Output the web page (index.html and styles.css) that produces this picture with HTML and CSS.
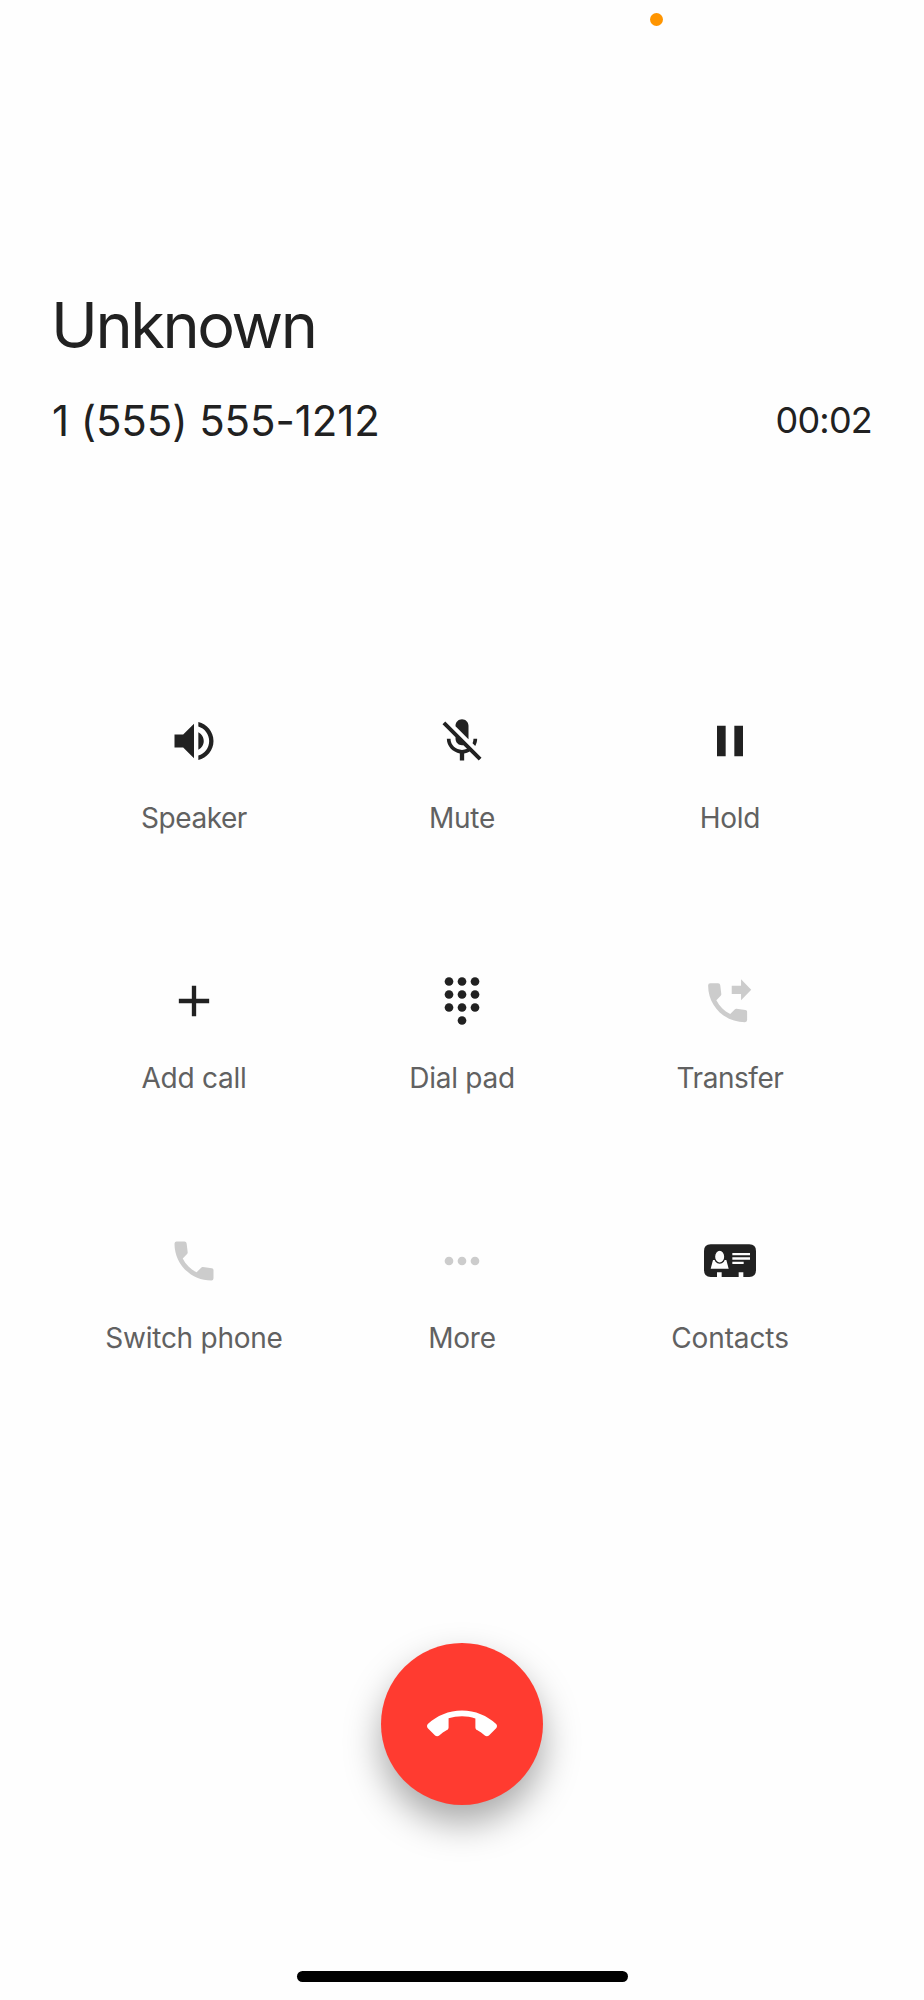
FILE: index.html
```html
<!DOCTYPE html>
<html lang="en">
<head>
<meta charset="utf-8">
<title>Call</title>
<link rel="stylesheet" href="styles.css">
</head>
<body>
<main class="screen">
  <div class="status"><span class="mic-dot"></span></div>
  <header class="caller">
    <h1 class="name">Unknown</h1>
    <div class="details">
      <span class="number">1 (555) 555-1212</span>
      <span class="timer">00:02</span>
    </div>
  </header>
  <section class="actions">
    <button class="action">
      <svg class="icon" viewBox="0 0 24 24"><path d="M3 9v6h4l5 5V4L7 9H3zm13.5 3c0-1.77-1.02-3.29-2.5-4.03v8.05c1.48-.73 2.5-2.25 2.5-4.02zM14 3.23v2.06c2.89.86 5 3.54 5 6.71s-2.11 5.85-5 6.71v2.06c4.01-.91 7-4.49 7-8.77s-2.99-7.86-7-8.77z"/></svg>
      <span class="label tight">Speaker</span>
    </button>
    <button class="action">
      <svg class="icon" viewBox="0 0 24 24"><path d="M19 11h-1.7c0 .74-.16 1.43-.43 2.05l1.23 1.23c.56-.98.9-2.09.9-3.28zm-4.02.17c0-.06.02-.11.02-.17V5c0-1.66-1.34-3-3-3S9 3.34 9 5v.18l5.98 5.99zM4.27 3L3 4.27l6.01 6.01V11c0 1.66 1.33 3 2.99 3 .22 0 .44-.03.65-.08l1.66 1.66c-.71.33-1.5.52-2.31.52-2.76 0-5.3-2.1-5.3-5.1H5c0 3.41 2.72 6.23 6 6.72V21h2v-3.28c.91-.13 1.77-.45 2.54-.9L19.73 21 21 19.73 4.27 3z"/></svg>
      <span class="label">Mute</span>
    </button>
    <button class="action">
      <svg class="icon" viewBox="0 0 24 24"><path d="M6 19h4V5H6v14zm8-14v14h4V5h-4z"/></svg>
      <span class="label">Hold</span>
    </button>
    <button class="action">
      <svg class="icon" viewBox="0 0 24 24"><path d="M19 13h-6v6h-2v-6H5v-2h6V5h2v6h6v2z"/></svg>
      <span class="label">Add call</span>
    </button>
    <button class="action">
      <svg class="icon" viewBox="0 0 24 24"><circle cx="6" cy="3" r="2"/><circle cx="12" cy="3" r="2"/><circle cx="18" cy="3" r="2"/><circle cx="6" cy="9" r="2"/><circle cx="12" cy="9" r="2"/><circle cx="18" cy="9" r="2"/><circle cx="6" cy="15" r="2"/><circle cx="12" cy="15" r="2"/><circle cx="18" cy="15" r="2"/><circle cx="12" cy="21" r="2"/></svg>
      <span class="label">Dial pad</span>
    </button>
    <button class="action">
      <svg class="icon off" viewBox="0 0 24 24"><path d="M17.1 11.7l4.7-4.85-4.7-4.85v2.95h-4.3v3.85h4.3z"/><path transform="translate(-1.1 .8)" d="M4 3H7.6Q8.5 3 8.6 3.9L9.1 8.1Q9.1 8.5 8.8 8.8L6.8 10.8C8.2 13.6 10.4 15.8 13.2 17.2L15.4 15Q15.7 14.7 16.1 14.8L20.2 15.3Q21 15.4 21 16.2V20Q21 21 20 21C10.6 21 3 13.4 3 4Q3 3 4 3Z"/></svg>
      <span class="label tight">Transfer</span>
    </button>
    <button class="action">
      <svg class="icon off" viewBox="0 0 24 24"><path d="M4 3H7.6Q8.5 3 8.6 3.9L9.1 8.1Q9.1 8.5 8.8 8.8L6.8 10.8C8.2 13.6 10.4 15.8 13.2 17.2L15.4 15Q15.7 14.7 16.1 14.8L20.2 15.3Q21 15.4 21 16.2V20Q21 21 20 21C10.6 21 3 13.4 3 4Q3 3 4 3Z"/></svg>
      <span class="label">Switch phone</span>
    </button>
    <button class="action">
      <svg class="icon off" viewBox="0 0 24 24"><circle cx="6" cy="12" r="2"/><circle cx="12" cy="12" r="2"/><circle cx="18" cy="12" r="2"/></svg>
      <span class="label">More</span>
    </button>
    <button class="action">
      <svg class="icon" viewBox="0 0 156 156"><path d="M20 28H136Q156 28 156 48V105Q156 126 136 126H118V112H104V126H53V112H39V126H20Q0 126 0 105V48Q0 28 20 28Z"/><g class="cut"><path d="M27 75H67L74 101H20Z"/><ellipse class="head" cx="47" cy="65" rx="15.5" ry="19.5"/><path d="M85 54h53v7H85zM85 67h53v7H85zM85 80h34v7H85z"/></g></svg>
      <span class="label wide">Contacts</span>
    </button>
  </section>
  <footer class="hangup">
    <button class="end" aria-label="End call">
      <svg class="end-icon" viewBox="0 0 24 24"><path d="M12 9c-1.6 0-3.15.25-4.6.72v3.1c0 .39-.23.74-.56.9-.98.49-1.87 1.12-2.66 1.85-.18.18-.43.28-.7.28-.28 0-.53-.11-.71-.29L.29 13.08c-.18-.17-.29-.42-.29-.7 0-.28.11-.53.29-.71C3.34 8.78 7.46 7 12 7s8.66 1.78 11.71 4.67c.18.18.29.43.29.71 0 .28-.11.53-.29.71l-2.48 2.48c-.18.18-.43.29-.71.29-.27 0-.52-.11-.7-.28-.79-.74-1.69-1.36-2.67-1.85-.33-.16-.56-.5-.56-.9v-3.1C15.15 9.25 13.6 9 12 9z"/></svg>
    </button>
  </footer>
  <div class="home-bar"></div>
</main>
</body>
</html>
```
FILE: styles.css
```css
* { box-sizing: border-box; }
body { margin: 0; background: #fefefe; font-family: Inter, "Liberation Sans", sans-serif; color: #212121; }
button { appearance: none; border: 0; margin: 0; padding: 0; background: none; font: inherit; color: inherit; }
.screen { display: flex; flex-direction: column; align-items: center; width: 924px; height: 2000px; overflow: hidden; padding-bottom: 18px; }
.status { width: 100%; height: 287px; padding: 13px 0 0 650px; }
.mic-dot { display: block; width: 13px; height: 13px; border-radius: 50%; background: #ff9500; }
.caller { width: 100%; padding: 0 52px; }
.name { margin: 0 0 0 -1px; font-size: 63px; font-weight: 400; line-height: 76px; letter-spacing: -2.4px; }
.details { display: flex; justify-content: space-between; align-items: center; height: 60px; margin-top: 27px; }
.number { font-size: 42px; letter-spacing: -0.1px; }
.timer { font-size: 36px; letter-spacing: -0.8px; }
.actions { display: grid; grid-template-columns: repeat(3, 268px); grid-auto-rows: 260px; margin-top: 265px; }
.action { display: flex; flex-direction: column; align-items: center; justify-content: flex-start; }
.icon { display: block; width: 52px; height: 52px; fill: #212121; }
.off { fill: #ccc; }
.cut { fill: #fefefe; }
.head { stroke: #212121; stroke-width: 4px; }
.label { margin-top: 33px; font-size: 28px; line-height: 36px; letter-spacing: -0.25px; color: #616161; white-space: nowrap; }
.tight { letter-spacing: -0.45px; }
.wide { letter-spacing: -0.1px; }
.hangup { margin-top: 148px; }
.end { display: flex; align-items: center; justify-content: center; width: 162px; height: 162px; border-radius: 50%; background: #ff3b30; box-shadow: 0 18px 36px rgba(0, 0, 0, 0.34); }
.end-icon { width: 70px; height: 70px; margin-top: 2px; fill: #fff; }
.home-bar { width: 331px; height: 11px; margin-top: auto; border-radius: 6px; background: #000; }
```
